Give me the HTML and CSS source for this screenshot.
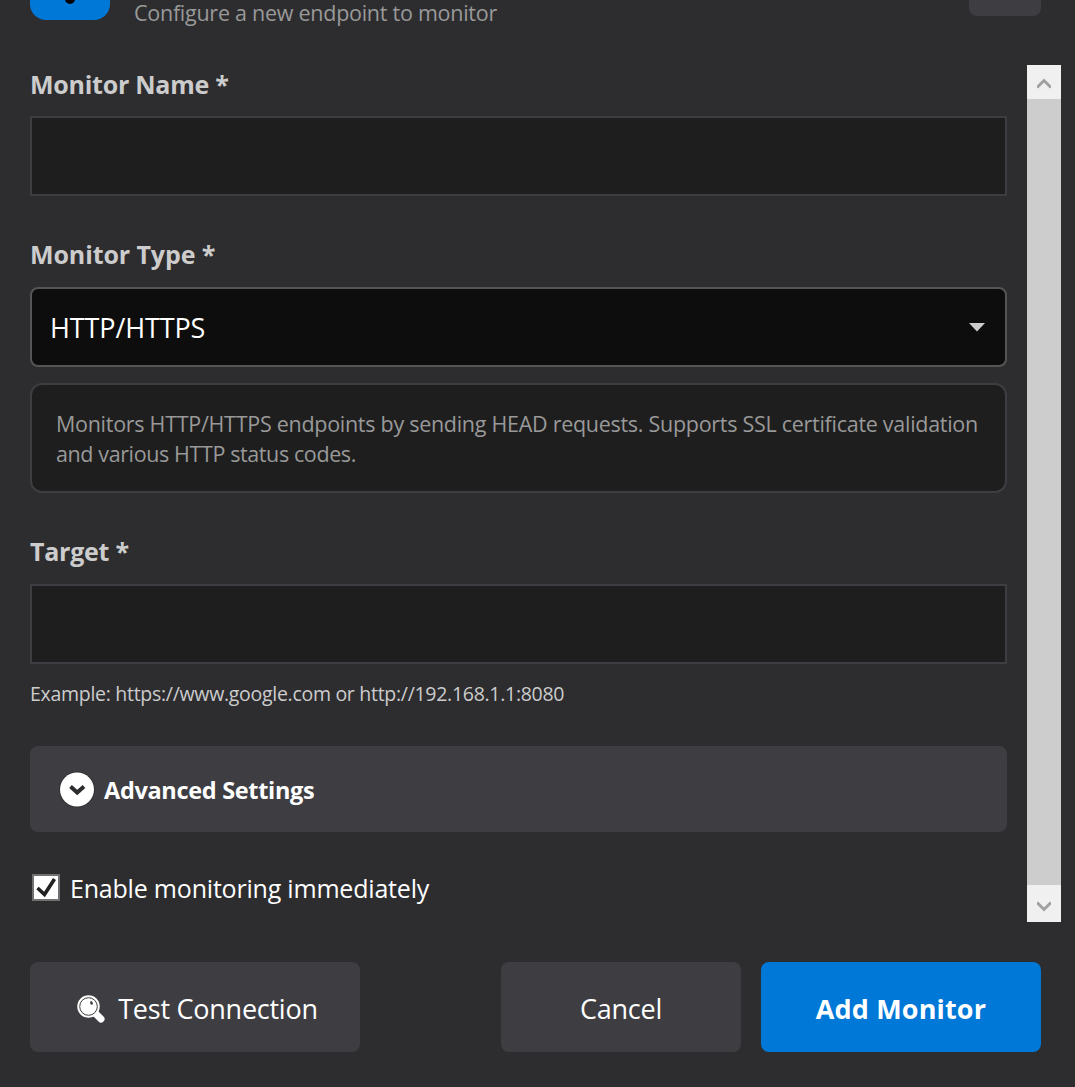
FILE: index.html
```html
<!DOCTYPE html>
<html lang="en">
<head>
<meta charset="utf-8">
<title>Add Monitor</title>
<link rel="stylesheet" href="styles.css">
</head>
<body>
<main class="dialog">
  <header class="header">
    <div class="tile"><svg width="80" height="20" viewBox="0 0 80 20"><circle cx="40" cy="-1" r="5" fill="#000"/></svg></div>
    <p class="subtitle">Configure a new endpoint to monitor</p>
    <div class="close"></div>
  </header>
  <div class="body">
    <form class="form">
      <label class="label name">Monitor Name *</label>
      <div class="input"></div>
      <label class="label type">Monitor Type *</label>
      <div class="select"><span class="value">HTTP/HTTPS</span>
        <svg width="16" height="9" viewBox="0 0 16 9"><path d="M0 0H16L8 8.5Z" fill="#ccc"/></svg>
      </div>
      <div class="info"><span class="line1">Monitors HTTP/HTTPS endpoints by sending HEAD requests. Supports SSL certificate validation</span><br><span class="line2">and various HTTP status codes.</span></div>
      <label class="label target">Target *</label>
      <div class="input"></div>
      <p class="example">Example: https://www.google.com or http://192.168.1.1:8080</p>
      <div class="advanced">
        <svg width="38" height="38" viewBox="0 0 38 38"><circle cx="19" cy="19.500" r="18" fill="#303033"/><circle cx="19" cy="19.500" r="17" fill="#fff"/><path d="M12.500 16.500L19.200 22.500L26 16.500" fill="none" stroke="#2d2d30" stroke-width="4"/></svg>
        <span class="advtext">Advanced Settings</span>
      </div>
      <div class="check">
        <svg width="28" height="27" viewBox="0 0 28 27"><rect x="1" y="1" width="26" height="25" fill="#fff" stroke="#707070" stroke-width="2"/><path d="M5.500 14L12.500 20.500L22.500 5" fill="none" stroke="#212121" stroke-width="3.600"/></svg>
        <span class="checktext">Enable monitoring immediately</span>
      </div>
    </form>
    <div class="scrollbar">
      <div class="arrow up"><svg width="14" height="12" viewBox="0 0 14 12"><path d="M0 9.500L7 2.500L14 9.500" fill="none" stroke="#a0a0a0" stroke-width="3"/></svg></div>
      <div class="arrow down"><svg width="14" height="12" viewBox="0 0 14 12"><path d="M0 2.500L7 9.500L14 2.500" fill="none" stroke="#a0a0a0" stroke-width="3"/></svg></div>
    </div>
  </div>
  <footer class="footer">
    <button class="btn test">
      <svg width="30" height="30" viewBox="0 0 30 30"><path d="M19 19L25 25" stroke="#fff" stroke-width="7" stroke-linecap="round"/><circle cx="12.500" cy="12.500" r="11.200" fill="#fff"/><circle cx="12.500" cy="12.500" r="8.800" fill="none" stroke="#3e3e42" stroke-width="1"/><ellipse cx="15.500" cy="9" rx="1.300" ry="1.800" transform="rotate(-25 15.500 9)" fill="#3e3e42"/></svg>
      <span class="testtext">Test Connection</span>
    </button>
    <button class="btn cancel"><span>Cancel</span></button>
    <button class="btn add"><span>Add Monitor</span></button>
  </footer>
</main>
</body>
</html>
```
FILE: styles.css
```css
* { box-sizing: border-box; }
body { margin: 0; background: #2d2d30; color: #fff; font-family: "Open Sans", "Noto Sans", sans-serif; }
svg { display: block; flex: none; }
p { margin: 0; }
span { white-space: nowrap; }
.dialog { width: 1075px; height: 1087px; display: flex; flex-direction: column; }
.header { height: 65px; flex: none; padding: 0 34px 0 30px; display: flex; align-items: flex-start; }
.tile { width: 80px; height: 20px; background: #0078d7; border-radius: 0 0 16px 16px; }
.subtitle { margin-left: 24px; flex: 1; font-size: 21.5px; line-height: 25px; color: #999; letter-spacing: -0.26px; }
.close { width: 72px; height: 16px; background: #3e3e42; border-radius: 0 0 8px 8px; }
.body { height: 857px; flex: none; display: flex; justify-content: space-between; padding: 0 14px 0 30px; }
.form { width: 977px; display: flex; flex-direction: column; }
.label { height: 36px; line-height: 36px; font-size: 25px; font-weight: 700; color: #ccc; white-space: nowrap; letter-spacing: -0.25px; }
.name { margin: 1px 0 14px; }
.input { height: 80px; border: 2px solid #3e3e42; background: #1e1e1e; flex: none; }
.type { margin: 40px 0 15px; letter-spacing: -0.1px; }
.select { height: 80px; flex: none; border: 2px solid #555; border-radius: 8px; background: #0d0d0d; display: flex; align-items: center; justify-content: space-between; padding: 0 20px 0 18px; font-size: 27px; }
.value { letter-spacing: -0.12px; }
.info { height: 110px; flex: none; margin-top: 16px; border: 2px solid #3e3e42; border-radius: 12px; background: #1e1e1e; padding: 24px; font-size: 21.5px; line-height: 30px; color: #999; }
.line1 { letter-spacing: -0.28px; }
.line2 { letter-spacing: -0.39px; }
.target { margin: 40px 0 15px; }
.example { height: 28px; margin-top: 16px; font-size: 19.5px; line-height: 28px; color: #ccc; letter-spacing: -0.29px; }
.advanced { height: 86px; flex: none; margin-top: 38px; padding-left: 28px; border-radius: 8px; background: #3e3e42; display: flex; align-items: center; gap: 8px; font-size: 23.5px; font-weight: 700; letter-spacing: -0.32px; }
.advtext { padding-top: 2px; }
.check { height: 36px; margin-top: 37px; padding-left: 2px; display: flex; align-items: center; gap: 10px; font-size: 25px; letter-spacing: -0.2px; }
.checktext { padding-top: 2px; }
.scrollbar { width: 34px; background: #cdcdcd; display: flex; flex-direction: column; justify-content: space-between; }
.arrow { height: 34px; background: #f0f0f0; display: flex; align-items: center; justify-content: center; }
.up { padding-top: 4px; }
.down { height: 37px; padding-top: 5px; }
.footer { margin: 40px 34px 0 30px; height: 90px; display: flex; gap: 20px; }
.btn { height: 90px; padding: 2px 0 0; border: 0; border-radius: 8px; background: #3e3e42; color: #fff; font: 400 27px "Open Sans", "Noto Sans", sans-serif; display: flex; align-items: center; justify-content: center; letter-spacing: -0.25px; }
.test { width: 330px; gap: 12px; margin-right: auto; padding-left: 4px; }
.test svg { margin-top: 2px; }
.cancel { width: 240px; }
.add { width: 280px; background: #0078d7; font-weight: 700; letter-spacing: 0.15px; }
```
